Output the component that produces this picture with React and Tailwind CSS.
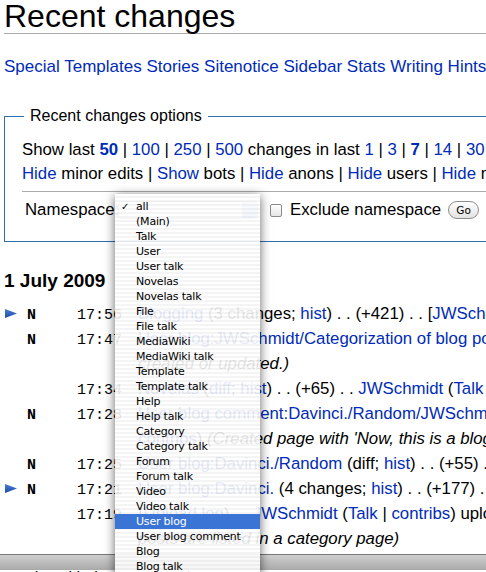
import React from "react";

const A = ({ children, className = "" }) => (
  <span className={"text-[#002bb8] " + className}>{children}</span>
);

function Arrow() {
  return (
    <svg width="12" height="9" viewBox="0 0 12 9">
      <defs>
        <linearGradient id="ag" x1="0" y1="0" x2="0" y2="1">
          <stop offset="0" stopColor="#4a7ed6" />
          <stop offset="1" stopColor="#1c4aa6" />
        </linearGradient>
      </defs>
      <polygon points="0,0 12,4.5 0,9" fill="url(#ag)" />
    </svg>
  );
}

function Row({ arrow, n, time, children }) {
  return (
    <div className="flex h-[25px] items-baseline whitespace-nowrap leading-[25px]">
      <div className="w-[23px] self-start pl-[1px] pt-[8px]">{arrow ? <Arrow /> : null}</div>
      <div className="w-[50px] font-['Liberation_Mono',monospace] text-[15px] font-bold">{n ? "N" : ""}</div>
      <div className="w-[61px] font-['Liberation_Mono',monospace] text-[15px]">{time}</div>
      <div className="text-[16.8px]">{children}</div>
    </div>
  );
}

const items = [
  "all", "(Main)", "Talk", "User", "User talk", "Novelas", "Novelas talk", "File", "File talk",
  "MediaWiki", "MediaWiki talk", "Template", "Template talk", "Help", "Help talk", "Category",
  "Category talk", "Forum", "Forum talk", "Video", "Video talk", "User blog", "User blog comment",
  "Blog", "Blog talk",
];

export default function App() {
  return (
    <div className="relative h-[572px] w-[486px] overflow-hidden bg-white font-['Liberation_Sans',Arial,sans-serif] text-black">
      <div className="w-[800px] pl-[4px]">
        <h1 className="w-[600px] border-b border-[#aaa] pb-[2px] pt-[1px] text-[32px] leading-[30px]">Recent changes</h1>

        <div className="mt-[23px] whitespace-nowrap text-[17px] leading-[20px]">
          <A>Special</A> <A>Templates</A> <A>Stories</A> <A>Sitenotice</A> <A>Sidebar</A> <A>Stats</A>{" "}
          <A>Writing Hints</A> <A>Protected</A>
        </div>

        <fieldset className="mt-[29px] w-[650px] border border-[#2f6fab] px-[17px] pb-[19px] pt-[12px]">
          <legend className="ml-[2px] px-[6px] text-[16px] leading-[20px]">Recent changes options</legend>
          <div className="whitespace-nowrap text-[16.8px] leading-[24px]">
            Show last <A className="font-bold">50</A> | <A>100</A> | <A>250</A> | <A>500</A> changes in last{" "}
            <A>1</A> | <A>3</A> | <A className="font-bold">7</A> | <A>14</A> | <A>30</A> days
          </div>
          <div className="whitespace-nowrap text-[16.8px] leading-[24px]">
            <A>Hide</A> minor edits | <A>Show</A> bots | <A>Hide</A> anons | <A>Hide</A> users | <A>Hide</A> my edits
          </div>
          <div className="mt-[5px] border-t border-[#aaa]" />
          <div className="mt-[6px] flex h-[24px] items-center whitespace-nowrap text-[16.8px] leading-[24px]">
            <span className="ml-[3px] w-[93px]">Namespace:</span>
            <div className="relative h-[18px] w-[140px] rounded-[4px] border border-[#b0b0b0] bg-white">
              <div className="absolute right-0 top-0 h-full w-[15px] rounded-r-[4px] bg-[linear-gradient(180deg,#bcd4f2,#80aee6)]" />
            </div>
            <div className="ml-[12px] h-[13px] w-[12px] rounded-[2px] border border-[#8a8a8a] bg-[linear-gradient(180deg,#ffffff,#e6e6e6)]" />
            <span className="ml-[8px]">Exclude namespace</span>
            <div className="ml-[7px] flex h-[18px] w-[31px] items-center justify-center rounded-full border border-[#8c8c8c] bg-[linear-gradient(180deg,#ffffff,#e2e2e2)] font-['DejaVu_Sans',sans-serif] text-[10.5px] leading-none">
              Go
            </div>
          </div>
        </fieldset>

        <h2 className="mt-[27px] text-[19px] font-bold leading-[24px]">1 July 2009</h2>

        <div className="mt-[8px]">
          <Row arrow n time="17:56">
            <A>Blogging</A> (3 changes; <A>hist</A>) . . (+421) . . [<A>JWSchmidt</A> (3×)]
          </Row>
          <Row n time="17:47">
            <A>User blog:JWSchmidt/Categorization of blog posts</A> (diff; <A>hist</A>)
          </Row>
          <Row time="">
            <i>created or updated.)</i>
          </Row>
          <Row time="17:34">
            <A>Novelas</A> (<A>diff</A>; <A>hist</A>) . . (+65) . . <A>JWSchmidt</A> (<A>Talk</A> | <A>contribs</A>)
          </Row>
          <Row n time="17:28">
            <A>User blog comment:Davinci./Random/JWSchmidt</A> (diff; <A>hist</A>)
          </Row>
          <Row time="">
            <A>contribs</A>) <i>(Created page with 'Now, this is a blog comment')</i>
          </Row>
          <Row n time="17:25">
            <A>User blog:Davinci./Random</A> (diff; <A>hist</A>) . . (+55) . . <A>Davinci.</A>
          </Row>
          <Row arrow n time="17:21">
            <A>User blog:Davinci.</A> (4 changes; <A>hist</A>) . . (+177) . . [<A>Davinci.</A>]
          </Row>
          <Row time="17:19">
            (<A>Upload log</A>) . . <A>JWSchmidt</A> (<A>Talk</A> | <A>contribs</A>) uploaded
          </Row>
          <Row time="">
            <i>posts are listed in a category page)</i>
          </Row>
        </div>
      </div>

      <div className="mt-[3px] h-[16px] w-full border-t border-[#777] bg-[linear-gradient(180deg,#cfcfcf,#b9b9b9_60%,#a9a9a9)]" />
      <div className="whitespace-nowrap pl-[8px] text-[16px] leading-[16px]">a&nbsp;&nbsp; the with these categories</div>

      <div className="absolute left-[115px] top-[194px] z-10 w-[145px] bg-[repeating-linear-gradient(180deg,rgba(255,255,255,0.9)_0px,rgba(255,255,255,0.9)_2px,rgba(243,243,243,0.9)_2px,rgba(243,243,243,0.9)_4px)] pb-[20px] pt-[5px] font-['DejaVu_Sans',sans-serif] text-[11px] tracking-[-0.2px] shadow-[0_2px_10px_rgba(0,0,0,0.6)]">
        {items.map((it, i) => (
          <div
            key={it}
            className={
              "relative h-[15px] pl-[21px] leading-[15px] " +
              (it === "User blog" ? "bg-[#3a74d4] text-white" : "text-black")
            }
          >
            {i === 0 ? <span className="absolute left-[6px] top-0 text-[10px]">✓</span> : null}
            {it}
          </div>
        ))}
      </div>
    </div>
  );
}
